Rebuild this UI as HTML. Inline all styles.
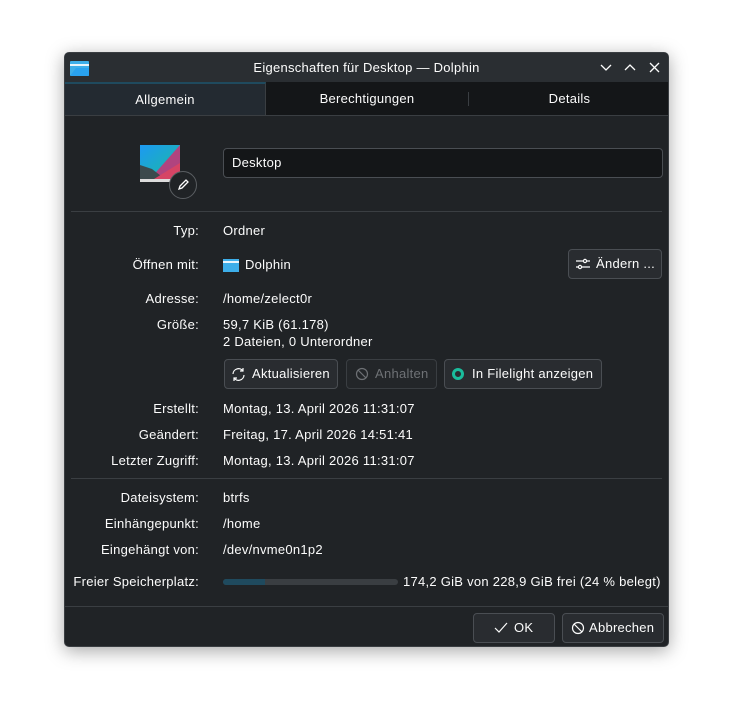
<!DOCTYPE html>
<html><head><meta charset="utf-8"><style>
body{margin:0;width:734px;height:724px;background:#fff;font-family:"Liberation Sans",sans-serif;font-size:13px;letter-spacing:0.27px;color:#fcfcfc;position:relative;overflow:hidden}
.win{position:absolute;left:64px;top:52px;width:605px;height:595px;background:#202326;border:1px solid #3a3e42;border-radius:5px;box-shadow:0 4px 18px rgba(0,0,0,.35);overflow:hidden;box-sizing:border-box}
.title{position:absolute;left:0;top:0;width:100%;height:29px;background:#2a2e32;text-align:center;line-height:29px;font-size:13px}
.tabs{position:absolute;left:0;top:29px;width:100%;height:33px;background:#141618;border-bottom:1px solid #3a3e42}
.tab{position:absolute;top:0;height:33px;line-height:34px;text-align:center}
.a{position:absolute}
.lbl{position:absolute;right:469px;text-align:right;white-space:nowrap}
.val{position:absolute;left:158px;white-space:nowrap}
.btn{position:absolute;border:1px solid #4a4e53;border-radius:4px;background:#292c30;box-sizing:border-box;line-height:28px;white-space:nowrap}
.hr{position:absolute;left:6px;right:6px;height:1px;background:#3a3e42}
</style></head><body>
<div class="win">
 <div class="title">Eigenschaften für Desktop — Dolphin
  <svg class="a" style="left:5px;top:7px" width="19" height="16"><rect x="0" y="1" width="19" height="15" rx="1" fill="#3daee9"/><rect x="0" y="4" width="19" height="2" fill="#e8f4fb"/><path d="M0 16 L6 8 L19 8 L19 16Z" fill="#1d99f3" opacity=".6"/></svg>
  <svg class="a" style="left:535px;top:9px" width="60" height="12" stroke="#fcfcfc" stroke-width="1.3" fill="none"><path d="M1 3 L6 8 L11 3"/><path d="M25 8 L30 3 L35 8"/><path d="M50 1 L59 10 M59 1 L50 10"/></svg>
 </div>
 <div class="tabs">
  <div class="tab" style="left:0;width:200px;background:#232a31;border-top:2px solid #1f4a5e;border-right:1px solid #3a3e42;height:31px;line-height:32px">Allgemein</div>
  <div class="tab" style="left:201px;width:202px">Berechtigungen</div>
  <div class="a" style="left:403px;top:10px;width:1px;height:14px;background:#3a3e42"></div>
  <div class="tab" style="left:404px;width:201px">Details</div>
 </div>
 <svg class="a" style="left:75px;top:92px" width="60" height="55"><defs><linearGradient id="g" x1="0" y1="0" x2="1" y2="1"><stop offset="0" stop-color="#1d99f3"/><stop offset="1" stop-color="#1abc9c"/></linearGradient></defs><rect x="0" y="0" width="40" height="34" fill="url(#g)"/><path d="M40 0 L40 34 L10 34Z" fill="#b0447f"/><path d="M0 20 L12 24 L25 34 L0 34Z" fill="#3c4a4d"/><path d="M14 34 L40 18 L40 34Z" fill="#d64465"/><rect x="0" y="34" width="40" height="3" fill="#dcdcdc"/></svg>
 <div class="a" style="left:104px;top:118px;width:28px;height:28px;border-radius:50%;background:#202326;border:1px solid #5a5e62;box-sizing:border-box"><svg width="28" height="28" style="position:absolute;left:-1px;top:-1px"><path d="M10 18 L11 15 L17 9 L19 11 L13 17Z" stroke="#fcfcfc" stroke-width="1.3" fill="none"/></svg></div>
 <div class="a" style="left:158px;top:95px;width:440px;height:30px;border:1px solid #4a4e53;border-radius:4px;background:#141618;box-sizing:border-box;line-height:28px;padding-left:8px">Desktop</div>
 <div class="hr" style="top:158px"></div>
 <div class="lbl" style="top:170px">Typ:</div><div class="val" style="top:170px">Ordner</div>
 <div class="lbl" style="top:204px">Öffnen mit:</div>
 <svg class="a" style="left:158px;top:205px" width="16" height="14"><rect y="1" width="16" height="13" fill="#3daee9"/><rect y="3" width="16" height="2" fill="#e8f4fb"/></svg>
 <div class="val" style="top:204px;left:180px">Dolphin</div>
 <div class="btn" style="left:503px;top:196px;width:94px;height:30px;padding-left:27px">Ändern ...
  <svg class="a" style="left:6px;top:7px" width="16" height="14" stroke="#fcfcfc" stroke-width="1.2" fill="none"><path d="M1 4 H15 M1 10 H15"/><circle cx="10" cy="4" r="1.6" fill="#292c30"/><circle cx="5" cy="10" r="1.6" fill="#292c30"/></svg></div>
 <div class="lbl" style="top:238px">Adresse:</div><div class="val" style="top:238px">/home/zelect0r</div>
 <div class="lbl" style="top:264px">Größe:</div><div class="val" style="top:264px;line-height:17px;margin-top:-1px">59,7 KiB (61.178)<br>2 Dateien, 0 Unterordner</div>
 <div class="btn" style="left:159px;top:306px;width:114px;height:30px;padding-left:27px">Aktualisieren
  <svg class="a" style="left:6px;top:7px" width="15" height="15" stroke="#fcfcfc" stroke-width="1.2" fill="none"><path d="M2 7 A5.5 5.5 0 0 1 12 4 M13 8 A5.5 5.5 0 0 1 3 11 M12 1 V4 H9 M3 14 V11 H6"/></svg></div>
 <div class="btn" style="left:281px;top:306px;width:91px;height:30px;padding-left:28px;color:#6e7175;background:#232629;border-color:#3a3e42">Anhalten
  <svg class="a" style="left:8px;top:7px" width="14" height="14" stroke="#6e7175" stroke-width="1.2" fill="none"><circle cx="7" cy="7" r="5.5"/><path d="M3 3 L11 11"/></svg></div>
 <div class="btn" style="left:379px;top:306px;width:158px;height:30px;padding-left:27px">In Filelight anzeigen
  <svg class="a" style="left:7px;top:8px" width="14" height="14"><circle cx="6" cy="6" r="4.5" stroke="#1abc9c" stroke-width="3" fill="none"/></svg></div>
 <div class="lbl" style="top:348px">Erstellt:</div><div class="val" style="top:348px">Montag, 13. April 2026 11:31:07</div>
 <div class="lbl" style="top:374px">Geändert:</div><div class="val" style="top:374px">Freitag, 17. April 2026 14:51:41</div>
 <div class="lbl" style="top:400px">Letzter Zugriff:</div><div class="val" style="top:400px">Montag, 13. April 2026 11:31:07</div>
 <div class="hr" style="top:425px"></div>
 <div class="lbl" style="top:437px">Dateisystem:</div><div class="val" style="top:437px">btrfs</div>
 <div class="lbl" style="top:463px">Einhängepunkt:</div><div class="val" style="top:463px">/home</div>
 <div class="lbl" style="top:489px">Eingehängt von:</div><div class="val" style="top:489px">/dev/nvme0n1p2</div>
 <div class="lbl" style="top:521px">Freier Speicherplatz:</div>
 <div class="a" style="left:158px;top:526px;width:175px;height:6px;border-radius:3px;background:#3a3e42;overflow:hidden"><div style="width:42px;height:6px;background:#1f4a5e"></div></div>
 <div class="val" style="top:521px;left:338px">174,2 GiB von 228,9 GiB frei (24 % belegt)</div>
 <div class="hr" style="top:553px;left:0;right:0"></div>
 <div class="btn" style="left:408px;top:560px;width:82px;height:30px;padding-left:40px">OK
  <svg class="a" style="left:20px;top:8px" width="14" height="12" stroke="#fcfcfc" stroke-width="1.2" fill="none"><path d="M1 6 L5 10 L13 1"/></svg></div>
 <div class="btn" style="left:497px;top:560px;width:102px;height:30px;padding-left:26px">Abbrechen
  <svg class="a" style="left:8px;top:7px" width="14" height="14" stroke="#fcfcfc" stroke-width="1.2" fill="none"><circle cx="7" cy="7" r="5.5"/><path d="M3 3 L11 11"/></svg></div>
</div>
</body></html>
